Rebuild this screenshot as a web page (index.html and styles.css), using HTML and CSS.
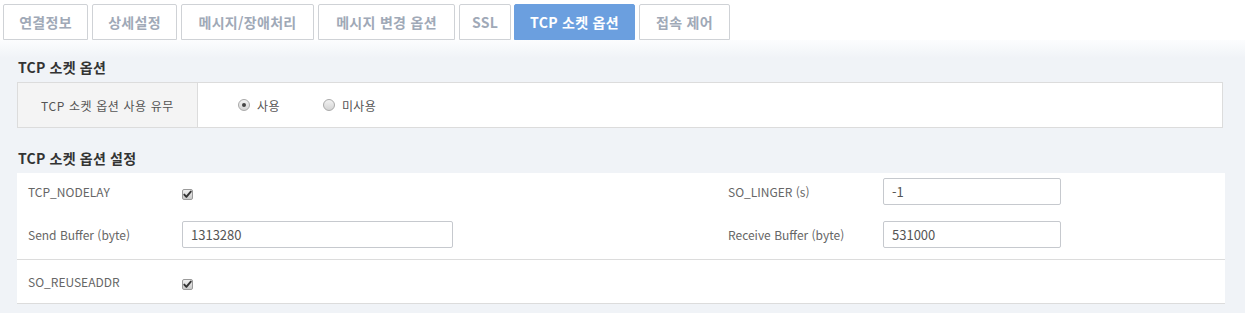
FILE: index.html
```html
<!DOCTYPE html>
<html lang="ko">
<head>
<meta charset="utf-8">
<title>TCP 소켓 옵션</title>
<link rel="stylesheet" href="styles.css">
</head>
<body>
<div class="tabs">
  <div class="tab tab-conn">연결정보</div>
  <div class="tab tab-detail">상세설정</div>
  <div class="tab tab-msg">메시지/장애처리</div>
  <div class="tab tab-change">메시지 변경 옵션</div>
  <div class="tab tab-ssl">SSL</div>
  <div class="tab tab-tcp active">TCP 소켓 옵션</div>
  <div class="tab tab-access">접속 제어</div>
</div>
<div class="content">
  <h3 class="heading">TCP 소켓 옵션</h3>
  <div class="usebox">
    <div class="usebox-label">TCP 소켓 옵션 사용 유무</div>
    <div class="usebox-body">
      <label class="radio"><span class="radio-dot checked"></span>사용</label>
      <label class="radio"><span class="radio-dot"></span>미사용</label>
    </div>
  </div>
  <h3 class="heading heading-2">TCP 소켓 옵션 설정</h3>
  <div class="settings">
    <div class="row row-main">
      <div class="lbl">TCP_NODELAY</div>
      <div class="fld"><span class="chk"><svg viewBox="0 0 11 11" width="11" height="11"><path d="M2.3 5.6 L4.4 7.9 L8.8 2.6" fill="none" stroke="#333" stroke-width="1.9" stroke-linecap="round" stroke-linejoin="round"/></svg></span></div>
      <div class="lbl">SO_LINGER (s)</div>
      <div class="fld"><div class="input short">-1</div></div>
      <div class="lbl">Send Buffer (byte)</div>
      <div class="fld"><div class="input long">1313280</div></div>
      <div class="lbl">Receive Buffer (byte)</div>
      <div class="fld"><div class="input short">531000</div></div>
    </div>
    <div class="row row-second">
      <div class="lbl">SO_REUSEADDR</div>
      <div class="fld"><span class="chk"><svg viewBox="0 0 11 11" width="11" height="11"><path d="M2.3 5.6 L4.4 7.9 L8.8 2.6" fill="none" stroke="#333" stroke-width="1.9" stroke-linecap="round" stroke-linejoin="round"/></svg></span></div>
    </div>
  </div>
</div>
</body>
</html>
```
FILE: styles.css
```css
* { box-sizing: border-box; }
html, body { margin: 0; padding: 0; }
body {
  font-family: "Noto Sans CJK KR", "Noto Sans", sans-serif;
  background: #f0f3f7;
  width: 1245px;
  height: 313px;
  overflow: hidden;
}
.tabs {
  display: flex;
  gap: 4px;
  padding: 4px 0 0 3px;
  height: 40px;
  background: #fff;
}
.tab {
  height: 36px;
  line-height: 34px;
  text-align: center;
  border: 1px solid #cfd2d6;
  border-radius: 2px 2px 0 0;
  background: #fff;
  color: #a0a9b7;
  font-size: 14px;
  font-weight: 700;
  white-space: nowrap;
  letter-spacing: 0.3px;
}
.tab-conn { width: 85px; }
.tab-detail { width: 85px; }
.tab-msg { width: 133px; }
.tab-change { width: 137px; }
.tab-ssl { width: 52px; }
.tab-tcp { width: 121px; margin-left: -1px; }
.tab-access { width: 91px; }
.tab.active {
  background: #6b9fdf;
  border-color: #6b9fdf;
  color: #fff;
}
.content {
  padding: 1px 20px 0 17px;
  background: linear-gradient(#fcfdfe 0, #f0f3f7 18px);
  height: 273px;
}
.heading {
  margin: 18px 0 0 1px;
  height: 23px;
  line-height: 17px;
  font-size: 14px;
  font-weight: 700;
  color: #333;
  letter-spacing: 0.2px;
}
.heading-2 { margin-top: 22px; height: 23px; line-height: 16px; }
.usebox {
  display: flex;
  height: 46px;
  border: 1px solid #dcdcdc;
  background: #fff;
  margin-right: 2px;
}
.usebox-label {
  width: 180px;
  background: #f4f4f4;
  border-right: 1px solid #dcdcdc;
  display: flex;
  align-items: center;
  justify-content: center;
  font-size: 12px;
  color: #555;
  letter-spacing: 0.6px;
}
.usebox-body {
  display: flex;
  align-items: center;
  gap: 43px;
  padding-left: 40px;
}
.radio {
  display: flex;
  align-items: center;
  gap: 7px;
  font-size: 12px;
  color: #555;
  letter-spacing: 0.4px;
}
.radio-dot {
  width: 12px;
  height: 12px;
  border-radius: 50%;
  border: 1px solid #a9a9a9;
  background: linear-gradient(#f2f2f2, #d4d4d4);
  display: flex;
  align-items: center;
  justify-content: center;
}
.radio-dot.checked::after {
  content: "";
  width: 4px;
  height: 4px;
  border-radius: 50%;
  background: #444;
}
.settings {
  background: #fff;
}
.row {
  display: grid;
  grid-template-columns: 154px 546px 155px 1fr;
  padding-left: 11px;
  border-bottom: 1px solid #dcdcdc;
  align-items: center;
}
.row-main {
  padding-top: 5px;
  padding-bottom: 11px;
  row-gap: 16px;
  grid-auto-rows: 27px;
}
.row-second {
  height: 44px;
}
.lbl {
  font-size: 12px;
  color: #666;
}
.fld { display: flex; align-items: center; }
.chk {
  width: 11px;
  height: 11px;
  border: 1px solid #9a9a9a;
  border-radius: 2px;
  background: linear-gradient(#f0f0f0, #c9c9c9);
  display: block;
  margin-top: 6px;
  position: relative;
}
.chk svg { position: absolute; left: -1px; top: -1px; }
.input {
  height: 27px;
  border: 1px solid #c6c9ce;
  border-radius: 2px;
  padding-left: 8px;
  font-size: 13px;
  line-height: 25px;
  color: #555;
  background: #fff;
}
.input.long { width: 271px; }
.input.short { width: 178px; }
```
